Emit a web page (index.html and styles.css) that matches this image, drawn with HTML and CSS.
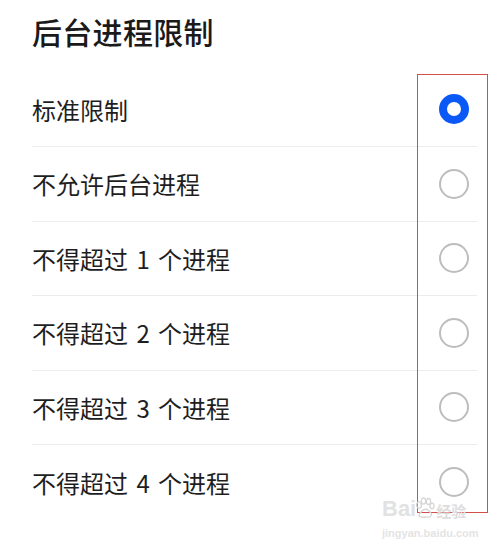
FILE: index.html
```html
<!DOCTYPE html>
<html lang="zh-CN">
<head>
<meta charset="utf-8">
<link rel="stylesheet" href="styles.css">
</head>
<body>
<div class="page">
  <h1 class="title">后台进程限制</h1>
  <ul class="list">
    <li class="row"><span class="label">标准限制</span><span class="radio on"></span></li>
    <li class="row"><span class="label">不允许后台进程</span><span class="radio"></span></li>
    <li class="row"><span class="label">不得超过 1 个进程</span><span class="radio"></span></li>
    <li class="row"><span class="label">不得超过 2 个进程</span><span class="radio"></span></li>
    <li class="row"><span class="label">不得超过 3 个进程</span><span class="radio"></span></li>
    <li class="row"><span class="label">不得超过 4 个进程</span><span class="radio"></span></li>
  </ul>
  <div class="mark"></div>
  <div class="wm">
    <div class="wm-top"><span class="wm-bai">Bai</span><svg class="paw" width="20" height="22" viewBox="0 0 20 22"><g fill="none" stroke="#d6d6d6" stroke-width="1.3"><ellipse cx="4" cy="8" rx="2.4" ry="3.2"/><ellipse cx="8.5" cy="4" rx="2.2" ry="3"/><ellipse cx="13.5" cy="4.5" rx="2.2" ry="3"/><ellipse cx="17" cy="9" rx="2" ry="2.8"/><path d="M4 18 Q10 7 16.5 17 Q16.5 21 10.5 20 Q4 21 4 18Z"/></g></svg><span class="wm-cn">经验</span></div>
    <div class="wm-url">jingyan.baidu.com</div>
  </div>
</div>
</body>
</html>
```
FILE: styles.css
```css
html, body {
  margin: 0;
  padding: 0;
  background: #ffffff;
}
.page {
  position: relative;
  width: 500px;
  height: 547px;
  overflow: hidden;
  font-family: "Noto Sans CJK SC", "Noto Sans", sans-serif;
  color: #1b1b1b;
}
.title {
  margin: 0 0 26.5px 0;
  padding: 16px 0 0 32px;
  font-size: 30px;
  line-height: 30px;
  font-weight: 500;
  color: #1a1a1a;
  letter-spacing: 0.3px;
}
.list {
  list-style: none;
  margin: 0 23px 0 32px;
  padding: 0;
}
.row {
  box-sizing: border-box;
  height: 74.5px;
  display: flex;
  align-items: center;
  justify-content: space-between;
  padding-right: 8px;
  border-bottom: 1.5px solid #ececec;
}
.row:last-child {
  border-bottom: none;
}
.label {
  font-size: 24px;
  line-height: 1;
  color: #1e1e1e;
  padding-top: 1px;
  word-spacing: 3px;
}
.radio {
  box-sizing: border-box;
  width: 30px;
  height: 30px;
  border-radius: 50%;
  border: 2px solid #bdbdbd;
}
.radio.on {
  border: 8px solid #0a59f7;
}
.mark {
  position: absolute;
  left: 416.5px;
  top: 74px;
  width: 71px;
  height: 439px;
  box-sizing: border-box;
  border: 1.5px solid #d24f4b;
}
.wm {
  position: absolute;
  left: 382px;
  top: 495px;
  display: flex;
  flex-direction: column;
  align-items: flex-start;
  font-family: "Liberation Sans", sans-serif;
}
.wm-top {
  display: flex;
  align-items: flex-end;
  height: 24px;
}
.wm-bai {
  font-size: 22px;
  line-height: 20px;
  font-weight: bold;
  color: #e2e2e2;
}
.paw {
  margin: 0 1px 0 -1px;
}
.wm-cn {
  font-family: "Noto Sans CJK SC", sans-serif;
  font-size: 15px;
  line-height: 17px;
  font-weight: bold;
  color: #dddddd;
}
.wm-url {
  margin-top: 9px;
  font-size: 11px;
  line-height: 11px;
  font-weight: bold;
  color: #e4e4e4;
}
```
